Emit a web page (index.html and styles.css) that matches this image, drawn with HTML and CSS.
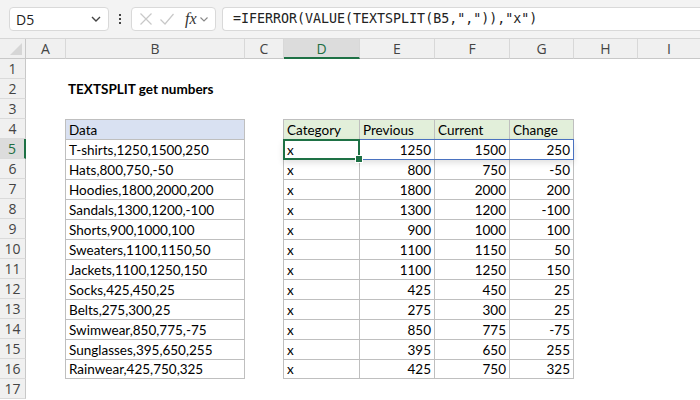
FILE: index.html
```html
<!DOCTYPE html>
<html>
<head>
<meta charset="utf-8">
<link rel="stylesheet" href="styles.css">
</head>
<body>
<div class="app">
  <div class="toolbar">
    <div class="namebox"><span>D5</span>
      <svg class="chev" width="12" height="8" viewBox="0 0 12 8"><path d="M2 2 L6 6 L10 2" fill="none" stroke="#444" stroke-width="1.4"/></svg>
    </div>
    <div class="dots"><i></i><i></i><i></i></div>
    <div class="fxbox">
      <svg width="14" height="14" viewBox="0 0 14 14"><path d="M1.5 1.5 L12.5 12.5 M12.5 1.5 L1.5 12.5" stroke="#c8c8c8" stroke-width="1.2"/></svg>
      <svg width="16" height="14" viewBox="0 0 16 14"><path d="M1.5 7.5 L6 12 L14.5 2" fill="none" stroke="#c8c8c8" stroke-width="1.2"/></svg>
      <span class="fx">fx</span>
      <svg width="10" height="7" viewBox="0 0 10 7"><path d="M1.5 1.5 L5 5 L8.5 1.5" fill="none" stroke="#888" stroke-width="1.1"/></svg>
    </div>
    <div class="formula">=IFERROR(VALUE(TEXTSPLIT(B5,",")),"x")</div>
  </div>
  <div class="sheet">
    <div class="corner"></div>
    <div class="ch">A</div><div class="ch">B</div><div class="ch">C</div><div class="ch sel">D</div><div class="ch">E</div><div class="ch">F</div><div class="ch">G</div><div class="ch">H</div><div class="ch last">I</div>

    <div class="rh">1</div><div class="c"></div><div class="c"></div><div class="c"></div><div class="c"></div><div class="c"></div><div class="c"></div><div class="c"></div><div class="c"></div><div class="c"></div>
    <div class="rh">2</div><div class="c"></div><div class="c title">TEXTSPLIT get numbers</div><div class="c"></div><div class="c"></div><div class="c"></div><div class="c"></div><div class="c"></div><div class="c"></div><div class="c"></div>
    <div class="rh">3</div><div class="c"></div><div class="c"></div><div class="c"></div><div class="c"></div><div class="c"></div><div class="c"></div><div class="c"></div><div class="c"></div><div class="c"></div>
    <div class="rh">4</div><div class="c"></div><div class="c t hb l tp">Data</div><div class="c"></div><div class="c t hg l tp">Category</div><div class="c t hg tp">Previous</div><div class="c t hg tp">Current</div><div class="c t hg tp r">Change</div><div class="c"></div><div class="c"></div>
    <div class="rh sel">5</div><div class="c"></div><div class="c t l r">T-shirts,1250,1500,250</div><div class="c"></div><div class="c t l">x</div><div class="c t n">1250</div><div class="c t n">1500</div><div class="c t n r">250</div><div class="c"></div><div class="c"></div>
    <div class="rh">6</div><div class="c"></div><div class="c t l r">Hats,800,750,-50</div><div class="c"></div><div class="c t l">x</div><div class="c t n">800</div><div class="c t n">750</div><div class="c t n r">-50</div><div class="c"></div><div class="c"></div>
    <div class="rh">7</div><div class="c"></div><div class="c t l r">Hoodies,1800,2000,200</div><div class="c"></div><div class="c t l">x</div><div class="c t n">1800</div><div class="c t n">2000</div><div class="c t n r">200</div><div class="c"></div><div class="c"></div>
    <div class="rh">8</div><div class="c"></div><div class="c t l r">Sandals,1300,1200,-100</div><div class="c"></div><div class="c t l">x</div><div class="c t n">1300</div><div class="c t n">1200</div><div class="c t n r">-100</div><div class="c"></div><div class="c"></div>
    <div class="rh">9</div><div class="c"></div><div class="c t l r">Shorts,900,1000,100</div><div class="c"></div><div class="c t l">x</div><div class="c t n">900</div><div class="c t n">1000</div><div class="c t n r">100</div><div class="c"></div><div class="c"></div>
    <div class="rh">10</div><div class="c"></div><div class="c t l r">Sweaters,1100,1150,50</div><div class="c"></div><div class="c t l">x</div><div class="c t n">1100</div><div class="c t n">1150</div><div class="c t n r">50</div><div class="c"></div><div class="c"></div>
    <div class="rh">11</div><div class="c"></div><div class="c t l r">Jackets,1100,1250,150</div><div class="c"></div><div class="c t l">x</div><div class="c t n">1100</div><div class="c t n">1250</div><div class="c t n r">150</div><div class="c"></div><div class="c"></div>
    <div class="rh">12</div><div class="c"></div><div class="c t l r">Socks,425,450,25</div><div class="c"></div><div class="c t l">x</div><div class="c t n">425</div><div class="c t n">450</div><div class="c t n r">25</div><div class="c"></div><div class="c"></div>
    <div class="rh">13</div><div class="c"></div><div class="c t l r">Belts,275,300,25</div><div class="c"></div><div class="c t l">x</div><div class="c t n">275</div><div class="c t n">300</div><div class="c t n r">25</div><div class="c"></div><div class="c"></div>
    <div class="rh">14</div><div class="c"></div><div class="c t l r">Swimwear,850,775,-75</div><div class="c"></div><div class="c t l">x</div><div class="c t n">850</div><div class="c t n">775</div><div class="c t n r">-75</div><div class="c"></div><div class="c"></div>
    <div class="rh">15</div><div class="c"></div><div class="c t l r">Sunglasses,395,650,255</div><div class="c"></div><div class="c t l">x</div><div class="c t n">395</div><div class="c t n">650</div><div class="c t n r">255</div><div class="c"></div><div class="c"></div>
    <div class="rh">16</div><div class="c"></div><div class="c t l r b">Rainwear,425,750,325</div><div class="c"></div><div class="c t l b">x</div><div class="c t n b">425</div><div class="c t n b">750</div><div class="c t n r b">325</div><div class="c"></div><div class="c"></div>
    <div class="rh">17</div><div class="c"></div><div class="c"></div><div class="c"></div><div class="c"></div><div class="c"></div><div class="c"></div><div class="c"></div><div class="c"></div><div class="c"></div>

    <div class="spill"></div>
    <div class="active"><i class="handle"></i></div>
  </div>
</div>
</body>
</html>
```
FILE: styles.css
```css
* { box-sizing: border-box; }
html, body { margin: 0; padding: 0; background: #fff; }
.app { width: 700px; height: 400px; overflow: hidden; }

.toolbar {
  height: 39px;
  background: #f3f3f3;
  display: flex;
  align-items: center;
  padding: 0 0 0 9px;
  gap: 0;
  border-bottom: 1px solid #d6d6d6;
}
.namebox {
  width: 100px; height: 24px;
  background: #fff;
  border: 1px solid #d9d9d9;
  border-radius: 4px;
  display: flex; align-items: center; justify-content: space-between;
  padding: 0 6px 0 6px;
  font: 14px "Open Sans", "Noto Sans", sans-serif;
  color: #222;
}
.dots {
  width: 22px; display: flex; flex-direction: column; align-items: center; gap: 2px;
}
.dots i { width: 2px; height: 2px; background: #444; display: block; }
.fxbox {
  width: 85px; height: 24px;
  background: #fff;
  border: 1px solid #d9d9d9;
  border-radius: 4px;
  display: flex; align-items: center;
  padding: 0 4px 0 7px;
  gap: 6px;
}
.fx {
  font: italic 16px "Liberation Serif", "DejaVu Serif", serif;
  color: #333;
  margin-left: 4px;
  margin-right: -4px;
}
.formula {
  flex: 1;
  height: 24px;
  margin-left: 6px;
  background: #fff;
  border: 1px solid #d9d9d9;
  border-right: none;
  border-radius: 4px 0 0 4px;
  padding: 0 0 0 10px;
  font: 13.3px "DejaVu Sans Mono", "Liberation Mono", monospace;
  line-height: 22px;
  color: #222;
}

.sheet {
  position: relative;
  display: grid;
  grid-template-columns: 26px 40px 179px 39px 76px 75px 75px 64px 64px 62px;
  grid-template-rows: repeat(18, 20px);
  font: 13.5px "Lato", "Open Sans", sans-serif;
  color: #000;
}
.corner {
  background: #f0f0f0;
  border-right: 1px solid #c8c8c8;
  border-bottom: 1px solid #c8c8c8;
  position: relative;
}
.corner::after {
  content: "";
  position: absolute; right: 3px; bottom: 3px;
  border-left: 12px solid transparent;
  border-bottom: 12px solid #d6d6d6;
}
.ch {
  background: #f0f0f0;
  border-right: 1px solid #d8d8d8;
  border-bottom: 1px solid #c8c8c8;
  text-align: center;
  font: 14px "Open Sans", "Noto Sans", sans-serif;
  line-height: 19px;
  color: #444;
}
.ch.last { border-right: none; }
.ch.sel {
  background: #dcdcdc;
  color: #1e6e42;
  border-bottom: 2px solid #1e7145;
}
.rh {
  background: #f0f0f0;
  border-right: 1px solid #c8c8c8;
  border-bottom: 1px solid #dadada;
  text-align: center;
  font: 14px "Open Sans", "Noto Sans", sans-serif;
  line-height: 20px;
  color: #444;
}
.rh.sel {
  background: #dcdcdc;
  color: #1e6e42;
  border-right: 2px solid #1e7145;
}
.c {
  white-space: nowrap;
  line-height: 20px;
  padding: 0 3px;
}
.title { font-weight: 700; overflow: visible; padding-left: 2px; }
.t {
  border-top: 1px solid #bfbfbf;
  border-right: 1px solid #bfbfbf;
  line-height: 20px;
}
.t.l { border-left: 1px solid #bfbfbf; margin-left: -1px; }
.t.b { border-bottom: 1px solid #bfbfbf; line-height: 19px; }
.n { text-align: right; }
.hb { background: #d9e1f2; }
.hg { background: #e2efda; }

.spill {
  position: absolute;
  left: 283px; top: 100px;
  width: 291px; height: 21px;
  border: 1px solid #4a72c0;
  box-shadow: 0 3px 6px rgba(0,0,0,0.12);
  pointer-events: none;
}
.active {
  position: absolute;
  left: 283px; top: 100px;
  width: 77px; height: 21px;
  border: 2px solid #1e7145;
  pointer-events: none;
}
.handle {
  position: absolute;
  right: -5px; bottom: -5px;
  width: 6px; height: 6px;
  background: #1e7145;
  border: 1px solid #fff;
  box-sizing: content-box;
  display: block;
}
```
